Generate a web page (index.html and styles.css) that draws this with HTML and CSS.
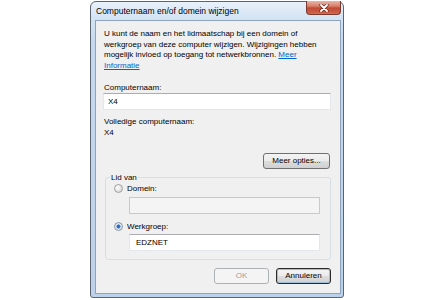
FILE: index.html
```html
<!DOCTYPE html>
<html lang="nl">
<head>
<meta charset="utf-8">
<title>Computernaam en/of domein wijzigen</title>
<link rel="stylesheet" href="styles.css">
</head>
<body>
<div class="window">
  <div class="titlebar">
    <span class="title">Computernaam en/of domein wijzigen</span>
    <div class="close">
      <svg width="10" height="8" viewBox="0 0 10 8">
        <path d="M2 1 L8 7 M8 1 L2 7" stroke="#5a2a22" stroke-width="3.2" stroke-linecap="round"/>
        <path d="M2 1 L8 7 M8 1 L2 7" stroke="#ffffff" stroke-width="1.8" stroke-linecap="round"/>
      </svg>
    </div>
  </div>
  <div class="client">
    <p class="intro">U kunt de naam en het lidmaatschap bij een domein of<br>werkgroep van deze computer wijzigen. Wijzigingen hebben<br>mogelijk invloed op toegang tot netwerkbronnen. <a class="link" href="#">Meer<br>Informatie</a></p>
    <div class="label label-first">Computernaam:</div>
    <div class="textbox">X4</div>
    <div class="label label-gap">Volledige computernaam:</div>
    <div class="label">X4</div>
    <div class="more-row"><div class="btn btn-more">Meer opties...</div></div>
    <fieldset class="group">
      <legend class="legend">Lid van</legend>
      <div class="radio-row">
        <span class="radio"></span><span>Domein:</span>
      </div>
      <div class="textbox textbox-sub textbox-disabled"></div>
      <div class="radio-row radio-row-gap">
        <span class="radio radio-on"></span><span>Werkgroep:</span>
      </div>
      <div class="textbox textbox-sub textbox-tight">EDZNET</div>
    </fieldset>
    <div class="buttons">
      <div class="btn btn-disabled">OK</div>
      <div class="btn btn-default">Annuleren</div>
    </div>
  </div>
</div>
</body>
</html>
```
FILE: styles.css
```css
html, body {
  margin: 0;
  padding: 0;
  background: #ffffff;
}
body {
  font-family: "Liberation Sans", Arial, sans-serif;
  font-size: 8px;
  color: #000000;
}
.window {
  margin: 1px 0 0 90px;
  width: 254px;
  height: 297px;
  box-sizing: border-box;
  border: 1px solid #5b6470;
  border-radius: 6px 6px 3px 3px;
  background: linear-gradient(#e9f1fa 0px, #d6e5f5 14px, #c5d9ee 40px, #bcd2ea 100%);
  padding: 0 2px 3px 4px;
  display: flex;
  flex-direction: column;
}
.titlebar {
  height: 18px;
  display: flex;
  align-items: flex-start;
  justify-content: space-between;
}
.title {
  font-size: 8.5px;
  line-height: 18px;
  margin-left: 1px;
  color: #000;
}
.close {
  width: 35px;
  height: 14px;
  box-sizing: border-box;
  border: 1px solid #7a3a30;
  border-top: none;
  border-radius: 0 0 4px 4px;
  background: linear-gradient(#eab3a6 0px, #d9826e 5px, #c24a35 7px, #cc5f48 12px, #e08c74 14px);
  display: flex;
  align-items: center;
  justify-content: center;
  margin-top: -1px;
}
.close svg {
  display: block;
}
.client {
  flex: 1;
  box-sizing: border-box;
  border: 1px solid #8fa3bd;
  background: #f0f0f0;
  padding: 8px 9px 0 7px;
}
.intro {
  margin: 0 0 0 1px;
  line-height: 10.5px;
}
.link {
  color: #0066cc;
  text-decoration: underline;
}
.label {
  line-height: 11px;
  margin-left: 1px;
}
.label-first {
  margin-top: 11px;
}
.label-gap {
  margin-top: 6px;
}
.textbox {
  height: 17px;
  box-sizing: border-box;
  background: #ffffff;
  border: 1px solid #e2e7ec;
  border-top-color: #abadb3;
  line-height: 15px;
  padding-left: 4px;
}
.more-row {
  margin-top: 15px;
  display: flex;
  justify-content: flex-end;
  padding-right: 1px;
}
.btn {
  height: 16px;
  box-sizing: border-box;
  border: 1px solid #707070;
  border-radius: 3px;
  background: linear-gradient(#f4f4f4 0%, #ebebeb 50%, #dddddd 51%, #d0d0d0 100%);
  line-height: 14px;
  text-align: center;
}
.btn-more {
  width: 67px;
}
.group {
  margin: 3px 0 0 2px;
  padding: 0 0 8px 8px;
  border: 1px solid #d5dfe5;
  border-radius: 3px;
  min-width: 0;
}
.legend {
  margin-left: -4px;
  padding: 0 1px;
  line-height: 11px;
}
.radio-row {
  display: flex;
  align-items: center;
  gap: 4px;
  height: 11px;
}
.radio-row-gap {
  margin-top: 7px;
}
.radio {
  width: 9px;
  height: 9px;
  box-sizing: border-box;
  border-radius: 50%;
  border: 1px solid #a0a0a0;
  background: radial-gradient(circle at 35% 35%, #ffffff 0%, #e6e6e6 50%, #cfcfcf 100%);
}
.radio-on {
  border-color: #8797a8;
  background: radial-gradient(circle at 50% 50%, #1f63c4 0%, #2b74d2 28%, #5f8fc4 38%, #ececec 48%, #dcdcdc 100%);
}
.textbox-sub {
  margin: 3px 10px 0 15px;
  padding-left: 6px;
}
.textbox-tight {
  margin-top: 2px;
}
.textbox-disabled {
  background: #f4f4f4;
  border-color: #c9c9c9;
}
.buttons {
  margin-top: 8px;
  display: flex;
  justify-content: flex-end;
  gap: 7px;
}
.buttons .btn {
  width: 55px;
}
.btn-disabled {
  border-color: #adb2b5;
  background: #f4f4f4;
  color: #a0a0a0;
}
.btn-default {
  border-color: #2a2a2a;
  box-shadow: inset 0 0 0 1px #9fbfd8;
}
```
